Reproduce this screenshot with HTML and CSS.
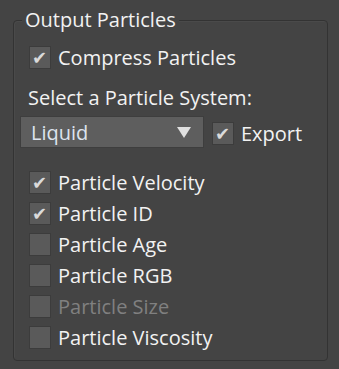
FILE: index.html
```html
<!DOCTYPE html>
<html lang="en">
<head>
  <meta charset="UTF-8" />
  <title>Output Particles</title>
  <link rel="stylesheet" href="styles.css">
</head>
<body>

  <div class="group">
    <div class="group-title">Output Particles</div>

    <label class="check-row">
      <span class="box checked"></span>
      <span>Compress Particles</span>
    </label>

    <div class="label-row">Select a Particle System:</div>

    <div class="select-row">
      <div class="dropdown">
        <span>Liquid</span>
        <span class="arrow"></span>
      </div>
      <label class="check-inline">
        <span class="box checked"></span>
        <span>Export</span>
      </label>
    </div>

    <div class="check-list">
      <label class="check-row"><span class="box checked"></span><span>Particle Velocity</span></label>
      <label class="check-row"><span class="box checked"></span><span>Particle ID</span></label>
      <label class="check-row"><span class="box"></span><span>Particle Age</span></label>
      <label class="check-row"><span class="box"></span><span>Particle RGB</span></label>
      <label class="check-row disabled"><span class="box"></span><span>Particle Size</span></label>
      <label class="check-row"><span class="box"></span><span>Particle Viscosity</span></label>
    </div>
  </div>

</body>
</html>
```

FILE: styles.css
```css
* {
  margin: 0;
  padding: 0;
  box-sizing: border-box;
}

body {
  font-family: 'Open Sans', 'Noto Sans', sans-serif;
  font-size: 20px;
  background: #444444;
  color: #f2f2f2;
  width: 339px;
  height: 369px;
  overflow: hidden;
}

.group {
  margin: 20px 11px 0 13px;
  height: 341px;
  border: 1px solid #333333;
  border-radius: 4px;
  padding: 0 0 0 6px;
  box-shadow: inset 1px 1px 0 #4a4a4a;
}

.group-title {
  width: fit-content;
  margin: -13px 0 0 2px;
  padding: 0 3px;
  height: 24px;
  line-height: 24px;
  background: #444444;
}

.check-row {
  display: flex;
  align-items: center;
  height: 31px;
  margin-left: 9px;
  gap: 7px;
}

.group > .check-row {
  margin-top: 10px;
}

.check-row.disabled {
  color: #808080;
}

.box {
  width: 22px;
  height: 23px;
  flex: none;
  background: #5a5a5a;
  border: 1px solid #3c3c3c;
  position: relative;
}

.box.checked::after {
  content: "\2714";
  position: absolute;
  left: 2px;
  top: 0;
  font-family: 'DejaVu Sans', sans-serif;
  font-size: 18px;
  line-height: 21px;
  color: #dadada;
}

.label-row {
  height: 31px;
  line-height: 31px;
  margin: 9px 0 0 8px;
}

.select-row {
  display: flex;
  align-items: flex-end;
  margin-top: 3px;
  gap: 8px;
}

.dropdown {
  width: 184px;
  height: 32px;
  background: #5e5e5e;
  border: 1px solid #3e3e3e;
  display: flex;
  align-items: center;
  justify-content: space-between;
  padding: 0 12px 0 10px;
  color: #dde4ee;
}

.arrow {
  width: 0;
  height: 0;
  border-left: 7px solid transparent;
  border-right: 7px solid transparent;
  border-top: 11px solid #e0e0e0;
}

.check-inline {
  display: flex;
  align-items: center;
  gap: 7px;
  margin-bottom: 1px;
}

.check-list {
  margin-top: 19px;
}
```
